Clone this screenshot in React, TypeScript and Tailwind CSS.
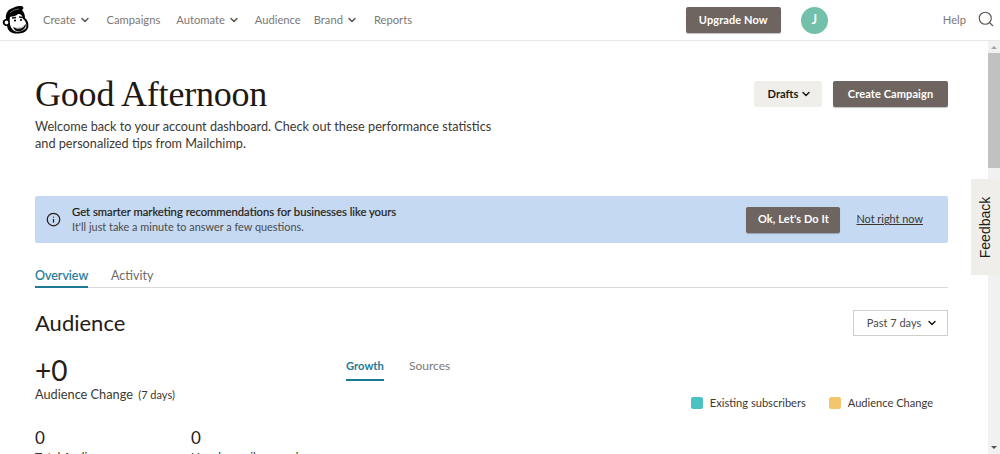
import { ChevronDown, Info, Search } from 'lucide-react';

const sans = "font-['Lato','Liberation_Sans',sans-serif]";

function NavItem({ label, menu }: { label: string; menu?: boolean }) {
  return (
    <span className="flex items-center text-[11.2px] text-[#7c7875]">
      {label}
      {menu && <ChevronDown size={12} strokeWidth={3} className="ml-[3px] text-[#5c5652]" />}
    </span>
  );
}

function Logo() {
  return (
    <svg width="27" height="28" viewBox="0 0 27 28" className="shrink-0">
      <path d="M4 13 C3 8 6 3 11 2 C14 0 20 -1 21 1 C22 2 21 3 20 4 C22 6 23 9 23 12 C26 14 27 19 26 22 C24 27 18 28 13 27.5 C9 27 6 25 5 20 C0 20 -1 14 4 13 Z" fill="#000" />
      <path d="M8 11 C10 10 13 11 16 8 C19 8 21 10 21 13 C24 15 25 19 24 22 C21 26 14 27 11 24 C8 21 7 16 8 11 Z" fill="#fff" />
      <path d="M11 21 C15 23 20 22 24 18 C24 22 21 25 17 25.5 C14 25.5 12 24 11 21 Z" fill="#111" />
      <path d="M12.5 21.5 C16 22.5 20 21 22.5 18.5 L22 20.5 C19 23 15 23.5 12.5 21.5 Z" fill="#ddd" />
      <path d="M10 12 L14 11.5 M17 11 L21 11.5" stroke="#111" strokeWidth="1.4" />
      <circle cx="13" cy="14.5" r="1.1" fill="#000" />
      <circle cx="19" cy="14" r="1.1" fill="#000" />
      <circle cx="4.5" cy="16.5" r="2.5" fill="#fff" stroke="#000" strokeWidth="1.2" />
      <path d="M8 7 C10 4.5 13 3.5 17 3" fill="none" stroke="#888" strokeWidth="0.8" />
    </svg>
  );
}

function Button({ label, className }: { label: string; className: string }) {
  return (
    <button className={`h-[26px] rounded-[2px] bg-[#6e6561] text-[11px] font-bold tracking-[0.1px] text-white shadow-[0_1px_1px_rgba(0,0,0,0.25)] ${className}`}>
      {label}
    </button>
  );
}

function Scrollbar() {
  return (
    <div className="flex w-[12px] shrink-0 flex-col items-center bg-[#f1f1f1]">
      <div className="mt-[5px] h-0 w-0 border-x-[3px] border-b-[3px] border-x-transparent border-b-[#a3a3a3]" />
      <div className="mt-[4px] h-[115px] w-full bg-[#c1c1c1]" />
      <div className="mt-auto mb-[5px] h-0 w-0 border-x-[3px] border-t-[3px] border-x-transparent border-t-[#505050]" />
    </div>
  );
}

export default function App() {
  return (
    <div className={`relative flex h-[454px] w-[1000px] flex-col overflow-hidden bg-white text-[#241c15] ${sans}`}>
      <header className="flex h-[41px] shrink-0 items-center border-b border-[#e8e8e8] pl-[2px]">
        <Logo />
        <nav className="ml-[14px] flex items-center">
          <NavItem label="Create" menu />
          <span className="ml-[16px]"><NavItem label="Campaigns" /></span>
          <span className="ml-[16px]"><NavItem label="Automate" menu /></span>
          <span className="ml-[15px]"><NavItem label="Audience" /></span>
          <span className="ml-[13px]"><NavItem label="Brand" menu /></span>
          <span className="ml-[16px]"><NavItem label="Reports" /></span>
        </nav>
        <Button label="Upgrade Now" className="ml-auto w-[95px]" />
        <div className="ml-[20px] flex h-[27px] w-[27px] items-center justify-center rounded-full bg-[#72c0a9] text-[13px] font-bold text-white">J</div>
        <span className="ml-[115px] text-[11.2px] text-[#7c7875]">Help</span>
        <Search size={18} strokeWidth={1.5} className="ml-[11px] mr-[5px] mb-[3px] text-[#5c5652]" />
      </header>

      <div className="flex min-h-0 flex-1">
        <main className="min-w-0 flex-1 overflow-hidden pl-[35px] pr-[40px]">
          <section className="flex items-start justify-between pt-[33px]">
            <div>
              <h1 className="font-['Liberation_Serif',serif] text-[36px] leading-[40px] tracking-[-0.2px] text-[#1f1812]">Good Afternoon</h1>
              <p className="mt-[4px] text-[12.7px] leading-[17px] text-[#3d3833]">
                Welcome back to your account dashboard. Check out these performance statistics
                <br />
                and personalized tips from Mailchimp.
              </p>
            </div>
            <div className="mt-[7px] flex gap-[11px]">
              <button className="flex h-[26px] w-[68px] items-center justify-center gap-[2px] rounded-[2px] bg-[#efeeea] pl-[4px] text-[11.2px] font-bold">
                Drafts <ChevronDown size={12} strokeWidth={3} />
              </button>
              <Button label="Create Campaign" className="w-[115px]" />
            </div>
          </section>

          <section className="mt-[44px] flex h-[47px] items-center rounded-[2px] bg-[#c5daf2] pl-[11px] pr-[25px]">
            <Info size={15} strokeWidth={2} className="text-[#241c15]" />
            <div className="ml-[11px] pb-[2px] leading-[15px]">
              <p className="text-[11.25px] [-webkit-text-stroke:0.2px]">Get smarter marketing recommendations for businesses like yours</p>
              <p className="text-[10.9px] text-[#4d4a48]">It'll just take a minute to answer a few questions.</p>
            </div>
            <Button label="Ok, Let's Do It" className="ml-auto w-[94px]" />
            <a className="ml-[16px] text-[10.9px] text-[#3a3531] underline">Not right now</a>
          </section>

          <div className="mt-[20px] flex h-[25px] border-b border-[#d9d9d9] text-[12.5px]">
            <span className="h-[25px] w-[53px] border-b-2 border-[#1d7a96] leading-[26px] text-[#1d7a96] [-webkit-text-stroke:0.2px]">Overview</span>
            <span className="ml-[23px] leading-[26px] text-[#6e6a66]">Activity</span>
          </div>

          <div className="mt-[21px] flex items-center justify-between">
            <h2 className="text-[22px] leading-[28px]">Audience</h2>
            <button className="flex h-[26px] w-[95px] items-center justify-center gap-[5px] border border-[#cfcfcc] pl-[4px] text-[11px] text-[#4d4a48]">
              Past 7 days <ChevronDown size={12} strokeWidth={3} className="text-[#241c15]" />
            </button>
          </div>

          <div className="mt-[18px] flex items-start">
            <div className="w-[311px]">
              <p className="text-[28px] leading-[30px]">+0</p>
              <p className="text-[12.75px] leading-[18px] text-[#3d3833]">
                Audience Change <span className="ml-[2px] text-[11px]">(7 days)</span>
              </p>
            </div>
            <div className="mt-[2px] flex text-[12px]">
              <span className="h-[24px] w-[38px] border-b-2 border-[#1d7a96] text-[11.2px] font-bold leading-[18px] text-[#1d7a96]">Growth</span>
              <span className="ml-[25px] leading-[18px] text-[#7c7875]">Sources</span>
            </div>
            <div className="ml-auto mt-[40px] flex items-center text-[11.1px] text-[#3d3833]">
              <span className="h-[12px] w-[12px] rounded-[2px] bg-[#4bc2c0]" />
              <span className="ml-[7px]">Existing subscribers</span>
              <span className="ml-[23px] h-[12px] w-[12px] rounded-[2px] bg-[#f5c56c]" />
              <span className="ml-[7px] mr-[15px]">Audience Change</span>
            </div>
          </div>

          <div className="mt-[16px] flex">
            <div className="w-[156px]">
              <p className="text-[17px] leading-[20px]">0</p>
              <p className="mt-[1px] text-[12px] leading-[16px] text-[#3d3833]">Total Audience</p>
            </div>
            <div>
              <p className="text-[17px] leading-[20px]">0</p>
              <p className="mt-[1px] text-[12px] leading-[16px] text-[#3d3833]">Unsub email opened</p>
            </div>
          </div>
        </main>
        <Scrollbar />
      </div>

      <div className="absolute right-0 top-[179px] flex h-[96px] w-[29px] items-center justify-center bg-[#efeeea]">
        <span className="-rotate-90 whitespace-nowrap font-['Liberation_Sans',sans-serif] text-[14px] text-[#241c15]">Feedback</span>
      </div>
    </div>
  );
}
